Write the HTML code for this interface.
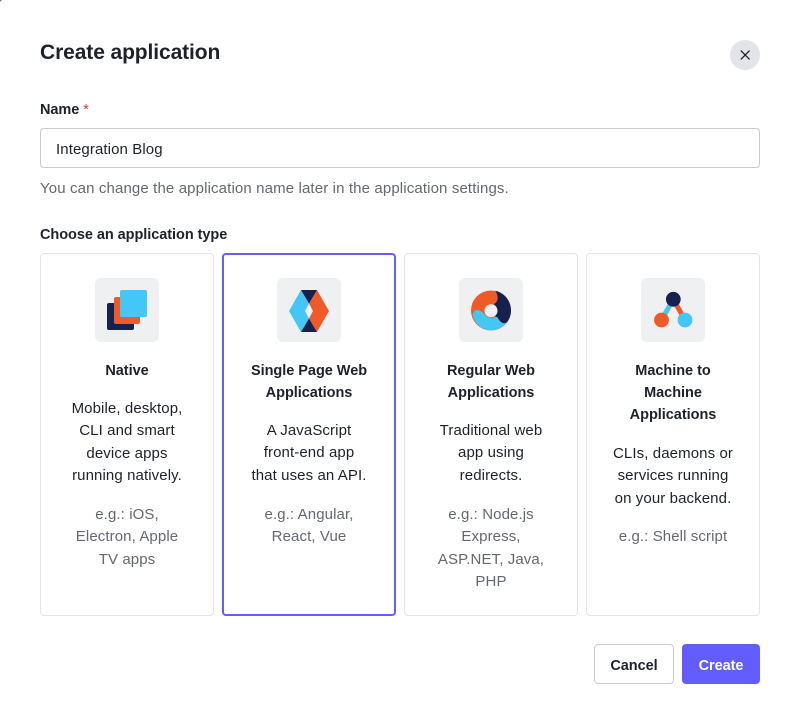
<!DOCTYPE html>
<html lang="en"><head><meta charset="utf-8"><title>Create application</title>
<style>
*{box-sizing:border-box;margin:0;padding:0}
html,body{width:799px;height:723px;background:#fff;overflow:hidden}
body{position:relative;font-family:"Liberation Sans",Arial,sans-serif;color:#1e212a;font-size:15px;-webkit-font-smoothing:antialiased}
.corner{position:absolute;left:0;top:0;width:2px;height:2px;background:#777;clip-path:polygon(0 0,100% 0,0 100%)}
h1{position:absolute;left:40px;top:39px;font-size:21px;line-height:28px;font-weight:700;letter-spacing:-.1px;color:#1e212a}
.close{position:absolute;left:730px;top:40px;width:30px;height:30px;border-radius:50%;background:#e3e4e7}
.close svg{position:absolute;left:0;top:0}
label{position:absolute;left:40px;font-weight:700;font-size:14.5px;line-height:20px;letter-spacing:-.05px}
.req{color:#d03c38;font-weight:400}
.input{position:absolute;left:40px;top:128px;width:720px;height:40px;border:1px solid #c9cace;border-radius:4px;padding-left:15px;line-height:41px;font-size:15px;letter-spacing:.1px;color:#1e212a}
.hint{position:absolute;left:40px;top:179px;line-height:20px;font-size:15px;letter-spacing:.13px;color:#65676e}
.card{position:absolute;top:253px;width:174px;height:363px;border:1px solid #e3e4e7;border-radius:4px;text-align:center}
.card.sel{border:2px solid #635dff}
.icon{position:absolute;left:54px;top:24px;width:64px;height:64px;border-radius:6px;background:#eff0f2}
.sel .icon{left:53px;top:23px}
.icon svg{display:block}
.t{position:absolute;left:0;right:0;top:106px;font-weight:700;font-size:14.5px;line-height:22.2px;letter-spacing:-.03px;color:#1e212a}
.sel .t{top:105px}
.d,.e{position:absolute;left:0;right:0;font-size:15px;line-height:22.4px;letter-spacing:.1px}
.d{color:#1e212a}.e{color:#65676e}
.btn{position:absolute;top:644px;height:40px;border-radius:4px;text-align:center;line-height:44px;font-weight:700;font-size:14.500px;letter-spacing:-.05px}
.cancel{left:594px;width:80px;border:1px solid #c9cace;line-height:42px;color:#1e212a}
.create{left:682px;width:78px;background:#635dff;color:#fff}
</style></head><body>
<div class="corner"></div>
<h1>Create application</h1>
<div class="close"><svg width="30" height="30" viewBox="0 0 30 30"><path d="M10.8 10.6 19.6 19.4M19.600 10.6 10.8 19.4" stroke="#1e212a" stroke-width="1.300" fill="none"/></svg></div>
<label style="top:100px">Name<span class="req"> *</span></label>
<div class="input">Integration Blog</div>
<div class="hint">You can change the application name later in the application settings.</div>
<label style="top:225px">Choose an application type</label>

<div class="card" style="left:40px">
<div class="icon"><svg width="64" height="64" viewBox="0 0 64 64">
<rect x="12" y="25" width="27" height="27" rx="2" fill="#16214d"/>
<rect x="19" y="19" width="26" height="27" rx="2" fill="#f05a28"/>
<rect x="25" y="12" width="27" height="27" rx="2" fill="#44c7f4"/></svg></div>
<div class="t">Native</div>
<div class="d" style="top:144px">Mobile, desktop,<br>CLI and smart<br>device apps<br>running natively.</div>
<div class="e" style="top:250px">e.g.: iOS,<br>Electron, Apple<br>TV apps</div>
</div>

<div class="card sel" style="left:222px">
<div class="icon"><svg width="64" height="64" viewBox="0 0 64 64">
<path d="M24 12 12 33 24 54 32 40.500 28 33 32 25.500Z" fill="#44c7f4"/>
<path d="M40 12 52 33 40 54 32 40.500 36 33 32 25.500Z" fill="#f05a28"/>
<path d="M24 12H40L32 25.500ZM24 54H40L32 40.500Z" fill="#16214d"/></svg></div>
<div class="t">Single Page Web<br>Applications</div>
<div class="d" style="top:165px">A JavaScript<br>front-end app<br>that uses an API.</div>
<div class="e" style="top:249px">e.g.: Angular,<br>React, Vue</div>
</div>

<div class="card" style="left:404px">
<div class="icon"><svg width="64" height="64" viewBox="0 0 64 64">
<circle cx="32" cy="32.500" r="20" fill="#f05a28"/>
<path d="M36.300 12.800C45.500 14.800 52 22.800 52 32.500C52 37 50.500 41 48 44.300C46 45.500 44.500 45.500 43 44.700C40 43 38 41 36.300 38C38 36 38.300 34.500 38.300 32.700C38.300 30 37 28 34.700 26.300C37 25 38.700 23 38.700 20.300C38.700 17 37.500 14.800 36.300 12.800Z" fill="#16214d"/>
<path d="M13.700 37C15.500 45.800 23.500 52.500 32 52.500C38.500 52.500 44.500 49.300 48 44.300C46 45.500 44.500 45.500 43 44.700C40.500 43.200 39.500 41 38 38.700C36 39.600 34 39.700 32 39.700C29.500 39.700 28 38.500 26.300 37C24 34.500 21.500 32 18 32C15.500 32 14 34 13.700 37Z" fill="#44c7f4"/>
<circle cx="32" cy="32.700" r="6.500" fill="#eff0f2"/></svg></div>
<div class="t">Regular Web<br>Applications</div>
<div class="d" style="top:166px">Traditional web<br>app using<br>redirects.</div>
<div class="e" style="top:250px">e.g.: Node.js<br>Express,<br>ASP.NET, Java,<br>PHP</div>
</div>

<div class="card" style="left:586px">
<div class="icon"><svg width="64" height="64" viewBox="0 0 64 64">
<path d="M32.300 21.300 20.500 42" stroke="#44c7f4" stroke-width="5"/>
<path d="M32.300 21.300 44 42" stroke="#f05a28" stroke-width="5"/>
<circle cx="20.500" cy="42" r="7.400" fill="#f05a28"/>
<circle cx="44" cy="42" r="7.400" fill="#44c7f4"/>
<circle cx="32.300" cy="21.300" r="7.400" fill="#16214d"/></svg></div>
<div class="t">Machine to<br>Machine<br>Applications</div>
<div class="d" style="top:189px">CLIs, daemons or<br>services running<br>on your backend.</div>
<div class="e" style="top:272px">e.g.: Shell script</div>
</div>

<div class="btn cancel">Cancel</div>
<div class="btn create">Create</div>
</body></html>
